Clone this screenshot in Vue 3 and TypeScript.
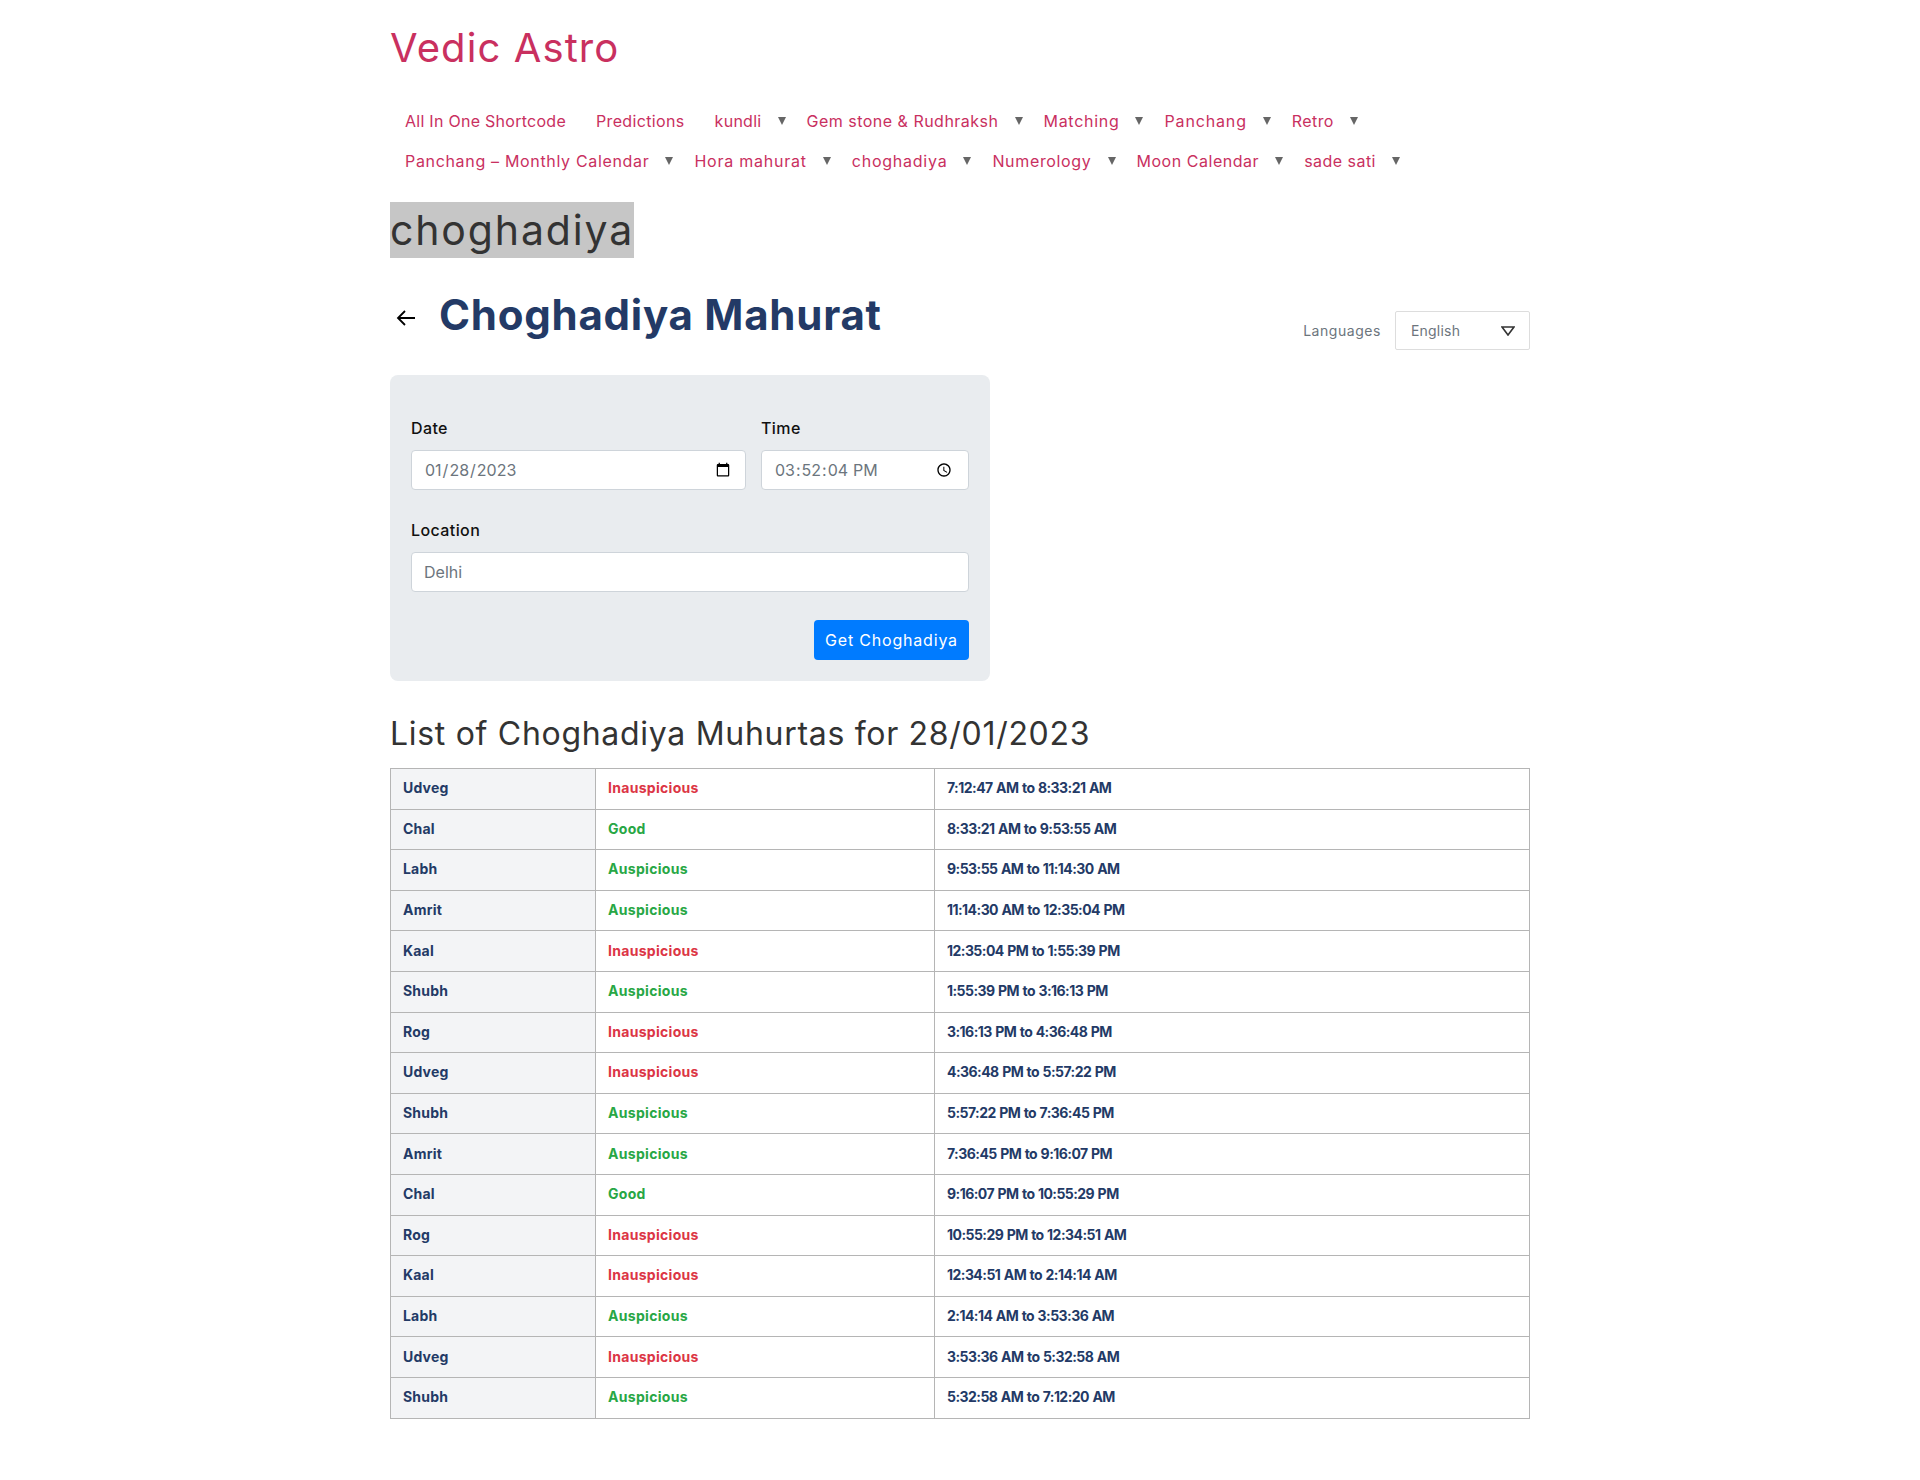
<script setup lang="ts">
interface IRow {
  name: string;
  quality: string;
  time: string;
}

interface IMenuItem {
  label: string;
  arrow: boolean;
  spacing: number;
}

const menu: IMenuItem[][] = [
  [
    { label: 'All In One Shortcode', arrow: false, spacing: 0.27 },
    { label: 'Predictions', arrow: false, spacing: 0.35 },
    { label: 'kundli', arrow: true, spacing: 0.28 },
    { label: 'Gem stone & Rudhraksh', arrow: true, spacing: 0.49 },
    { label: 'Matching', arrow: true, spacing: 0.71 },
    { label: 'Panchang', arrow: true, spacing: 0.86 },
    { label: 'Retro', arrow: true, spacing: 0.4 },
  ],
  [
    { label: 'Panchang – Monthly Calendar', arrow: true, spacing: 0.67 },
    { label: 'Hora mahurat', arrow: true, spacing: 0.77 },
    { label: 'choghadiya', arrow: true, spacing: 0.76 },
    { label: 'Numerology', arrow: true, spacing: 0.66 },
    { label: 'Moon Calendar', arrow: true, spacing: 0.53 },
    { label: 'sade sati', arrow: true, spacing: 0.47 },
  ],
];

const rows: IRow[] = [
  { name: 'Udveg', quality: 'Inauspicious', time: '7:12:47 AM to 8:33:21 AM' },
  { name: 'Chal', quality: 'Good', time: '8:33:21 AM to 9:53:55 AM' },
  { name: 'Labh', quality: 'Auspicious', time: '9:53:55 AM to 11:14:30 AM' },
  { name: 'Amrit', quality: 'Auspicious', time: '11:14:30 AM to 12:35:04 PM' },
  { name: 'Kaal', quality: 'Inauspicious', time: '12:35:04 PM to 1:55:39 PM' },
  { name: 'Shubh', quality: 'Auspicious', time: '1:55:39 PM to 3:16:13 PM' },
  { name: 'Rog', quality: 'Inauspicious', time: '3:16:13 PM to 4:36:48 PM' },
  { name: 'Udveg', quality: 'Inauspicious', time: '4:36:48 PM to 5:57:22 PM' },
  { name: 'Shubh', quality: 'Auspicious', time: '5:57:22 PM to 7:36:45 PM' },
  { name: 'Amrit', quality: 'Auspicious', time: '7:36:45 PM to 9:16:07 PM' },
  { name: 'Chal', quality: 'Good', time: '9:16:07 PM to 10:55:29 PM' },
  { name: 'Rog', quality: 'Inauspicious', time: '10:55:29 PM to 12:34:51 AM' },
  { name: 'Kaal', quality: 'Inauspicious', time: '12:34:51 AM to 2:14:14 AM' },
  { name: 'Labh', quality: 'Auspicious', time: '2:14:14 AM to 3:53:36 AM' },
  { name: 'Udveg', quality: 'Inauspicious', time: '3:53:36 AM to 5:32:58 AM' },
  { name: 'Shubh', quality: 'Auspicious', time: '5:32:58 AM to 7:12:20 AM' },
];

const qualityClass = (quality: string): string =>
  quality === 'Inauspicious' ? 'bad' : 'good';
</script>

<template>
  <div class="page">
    <h1 class="site-title">Vedic Astro</h1>

    <nav class="menu">
      <ul v-for="(line, i) in menu" :key="i" class="menu-line">
        <li v-for="item in line" :key="item.label" class="menu-item">
          <span :style="{ letterSpacing: item.spacing + 'px' }">{{ item.label }}</span>
          <i v-if="item.arrow" class="caret"></i>
        </li>
      </ul>
    </nav>

    <h2 class="page-title"><span>choghadiya</span></h2>

    <div class="head-row">
      <div class="head-left">
        <svg class="back" width="20" height="20" viewBox="0 0 20 20" fill="none" stroke="#000" stroke-width="1.8">
          <path d="M19 10H2M9 3l-7 7 7 7" />
        </svg>
        <h3 class="head-title">Choghadiya Mahurat</h3>
      </div>
      <div class="lang">
        <label>Languages</label>
        <div class="lang-select">
          <span>English</span>
          <svg width="14" height="10" viewBox="0 0 14 10" fill="none" stroke="#333" stroke-width="1.6">
            <path d="M1 1h12L7 9z" />
          </svg>
        </div>
      </div>
    </div>

    <form class="panel" @submit.prevent>
      <div class="panel-grid">
        <div class="field">
          <label>Date</label>
          <input type="date" value="2023-01-28" />
        </div>
        <div class="field">
          <label>Time</label>
          <input type="time" step="1" value="15:52:04" />
        </div>
        <div class="field wide">
          <label>Location</label>
          <input type="text" placeholder="Delhi" />
        </div>
      </div>
      <div class="actions">
        <button type="submit">Get Choghadiya</button>
      </div>
    </form>

    <h2 class="list-title">List of Choghadiya Muhurtas for 28/01/2023</h2>

    <table class="list">
      <tbody>
        <tr v-for="(row, i) in rows" :key="i">
          <th>{{ row.name }}</th>
          <td :class="qualityClass(row.quality)">{{ row.quality }}</td>
          <td class="time">{{ row.time }}</td>
        </tr>
      </tbody>
    </table>
  </div>
</template>

<style>
body {
  background: #fff;
}
</style>

<style scoped>
.page {
  width: 1140px;
  margin: 0 auto;
  min-height: 1480px;
  font-family: Inter, 'Noto Sans', sans-serif;
  color: #333;
}

.site-title {
  margin: 0;
  padding-top: 22px;
  height: 74px;
  font-size: 40px;
  line-height: 52px;
  font-weight: 400;
  color: #c9305f;
  letter-spacing: 1.1px;
}

.menu {
  padding-top: 5px;
}

.menu-line {
  display: flex;
  margin: 0;
  padding: 0;
  list-style: none;
  height: 40px;
  align-items: center;
}

.menu-item {
  display: flex;
  align-items: center;
  padding: 0 15px;
  font-size: 16px;
  color: #c9305f;
  white-space: nowrap;
}

.caret {
  width: 0;
  height: 0;
  margin-left: 16px;
  margin-right: -9px;
  border-left: 4px solid transparent;
  border-right: 4px solid transparent;
  border-top: 8px solid #666;
}

.page-title {
  margin: 21px 0 0;
  font-size: 41px;
  line-height: 56px;
  height: 56px;
  font-weight: 400;
  letter-spacing: 1.85px;
}

.page-title span {
  display: inline-block;
  background: #c6c6c6;
  color: #333;
}

.head-row {
  display: flex;
  justify-content: space-between;
  margin-top: 28px;
  height: 89px;
}

.head-left {
  display: flex;
  align-items: center;
  height: 60px;
}

.back {
  margin: 4px 0 0 6px;
}

.head-title {
  margin: -4px 0 0 23px;
  font-size: 42px;
  font-weight: 700;
  color: #233a66;
  letter-spacing: 0.75px;
}

.lang {
  display: flex;
  align-items: center;
  height: 39px;
  margin-top: 25px;
  gap: 14px;
  font-size: 14px;
  color: #6c757d;
  letter-spacing: 0.55px;
}

.lang-select {
  display: flex;
  width: 135px;
  height: 39px;
  box-sizing: border-box;
  align-items: center;
  justify-content: space-between;
  padding: 0 14px 0 15px;
  border: 1px solid #ddd;
  border-radius: 2px;
  letter-spacing: 0.2px;
}

.panel {
  width: 600px;
  height: 306px;
  box-sizing: border-box;
  padding: 41px 21px 0;
  background: #e9ecef;
  border-radius: 8px;
}

.panel-grid {
  display: grid;
  grid-template-columns: 335px 208px;
  column-gap: 15px;
  row-gap: 28px;
}

.field.wide {
  grid-column: 1 / 3;
}

.field label {
  display: block;
  font-size: 16px;
  font-weight: 500;
  line-height: 24px;
  margin-bottom: 10px;
  color: #111;
  letter-spacing: 0.4px;
}

.field input {
  display: block;
  width: 100%;
  height: 40px;
  box-sizing: border-box;
  padding: 6px 12px;
  border: 1px solid #ced4da;
  border-radius: 4px;
  background: #fff;
  font-family: inherit;
  font-size: 16px;
  color: #6c757d;
}

.field input::placeholder {
  color: #6c757d;
}

.actions {
  display: flex;
  justify-content: flex-end;
  margin-top: 28px;
}

.actions button {
  width: 155px;
  height: 40px;
  padding: 0;
  border: 0;
  border-radius: 4px;
  background: #007bff;
  color: #fff;
  font-family: inherit;
  font-size: 16px;
  letter-spacing: 0.8px;
}

.list-title {
  margin: 33px 0 0;
  font-size: 32px;
  line-height: 40px;
  font-weight: 400;
  color: #333;
  letter-spacing: 0.7px;
}

.list {
  width: 1140px;
  margin-top: 14px;
  border-collapse: collapse;
  table-layout: fixed;
  font-size: 14px;
}

.list th,
.list td {
  height: 40.6px;
  box-sizing: border-box;
  padding: 0 12px 2px;
  border: 1px solid #b5b5b5;
  text-align: left;
  font-weight: 700;
  color: #233a66;
}

.list th {
  width: 205px;
  background: #f3f4f6;
  letter-spacing: 0.2px;
}

.list td:nth-child(2) {
  width: 339px;
  letter-spacing: 0.3px;
}

.list td.time {
  letter-spacing: -0.55px;
  word-spacing: 0.7px;
}

.list td.bad {
  color: #dc3545;
}

.list td.good {
  color: #28a745;
}
</style>
